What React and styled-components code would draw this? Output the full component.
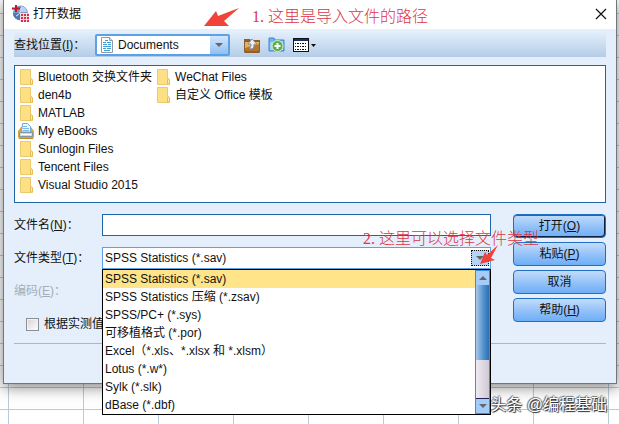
import { useState } from "react";
import styled, { createGlobalStyle } from "styled-components";

const FILES = [
  { name: "Bluetooth 交换文件夹" },
  { name: "den4b" },
  { name: "MATLAB" },
  { name: "My eBooks", type: "ebooks" },
  { name: "Sunlogin Files" },
  { name: "Tencent Files" },
  { name: "Visual Studio 2015" },
  { name: "WeChat Files" },
  { name: "自定义 Office 模板" },
];

const FILE_TYPES = [
  "SPSS Statistics (*.sav)",
  "SPSS Statistics 压缩 (*.zsav)",
  "SPSS/PC+ (*.sys)",
  "可移植格式 (*.por)",
  "Excel（*.xls、*.xlsx 和 *.xlsm）",
  "Lotus (*.w*)",
  "Sylk (*.slk)",
  "dBase (*.dbf)",
];

export default function App() {
  const [fileName, setFileName] = useState("");
  const [fileType, setFileType] = useState(FILE_TYPES[0]);

  return (
    <Sheet>
      <GlobalStyle />
      <Dialog role="dialog" aria-labelledby="dialog-title">
        <TitleBar>
          <AppIcon />
          <Title id="dialog-title">打开数据</Title>
          <CloseButton type="button" aria-label="关闭">
            <svg width="12" height="12" viewBox="0 0 12 12">
              <path d="M1 1l10 10M11 1L1 11" stroke="#111" strokeWidth="1.2" />
            </svg>
          </CloseButton>
          <PathNote>
            <BigArrow />
            1. 这里是导入文件的路径
          </PathNote>
        </TitleBar>

        <Content>
          <Toolbar>
            <PlaceLabel htmlFor="place">
              查找位置(<u>I</u>)：
            </PlaceLabel>
            <PlaceBox>
              <DocumentIcon />
              <PlaceSelect id="place">
                <option>Documents</option>
              </PlaceSelect>
              <PlaceArrow>
                <Triangle />
              </PlaceArrow>
            </PlaceBox>
            <Tools>
              <ToolButton type="button" aria-label="向上一级">
                <UpIcon />
              </ToolButton>
              <ToolButton type="button" aria-label="新建文件夹">
                <NewFolderIcon />
              </ToolButton>
              <ToolButton type="button" aria-label="查看">
                <ViewIcon />
              </ToolButton>
            </Tools>
          </Toolbar>

          <FileList>
            {FILES.map((file) => (
              <FileItem key={file.name}>
                {file.type === "ebooks" ? <EbooksIcon /> : <FolderIcon />}
                {file.name}
              </FileItem>
            ))}
          </FileList>

          <Form>
            <Fields>
              <label htmlFor="file-name">
                文件名(<u>N</u>)：
              </label>
              <NameInput
                id="file-name"
                value={fileName}
                onChange={(e) => setFileName(e.target.value)}
              />
              <label htmlFor="file-type">
                文件类型(<u>T</u>)：
              </label>
              <TypeBox>
                <TypeSelect
                  id="file-type"
                  value={fileType}
                  onChange={(e) => setFileType(e.target.value)}
                >
                  {FILE_TYPES.map((type) => (
                    <option key={type}>{type}</option>
                  ))}
                </TypeSelect>
                <TypeArrow>
                  <Triangle />
                </TypeArrow>
                <Popup>
                  <Options role="listbox" aria-label="文件类型">
                    {FILE_TYPES.map((type) => (
                      <Option
                        key={type}
                        role="option"
                        aria-selected={type === fileType}
                        $selected={type === fileType}
                        onClick={() => setFileType(type)}
                      >
                        {type}
                      </Option>
                    ))}
                  </Options>
                  <ScrollBar>
                    <ScrollButton type="button" aria-label="向上滚动">
                      <Triangle $up />
                    </ScrollButton>
                    <ScrollThumb />
                    <ScrollTrack />
                    <ScrollButton type="button" aria-label="向下滚动">
                      <Triangle />
                    </ScrollButton>
                  </ScrollBar>
                </Popup>
                <TypeNote>
                  2. 这里可以选择文件类型
                  <SmallArrow />
                </TypeNote>
              </TypeBox>
              <DisabledLabel>
                编码(<u>E</u>)：
              </DisabledLabel>
            </Fields>
            <Buttons>
              <ActionButton type="button" $primary>
                打开(<u>O</u>)
              </ActionButton>
              <ActionButton type="button">
                粘贴(<u>P</u>)
              </ActionButton>
              <ActionButton type="button">取消</ActionButton>
              <ActionButton type="button">
                帮助(<u>H</u>)
              </ActionButton>
            </Buttons>
          </Form>

          <CheckRow>
            <CheckBox type="checkbox" />
            根据实测值
          </CheckRow>
          <Divider />
        </Content>
      </Dialog>
      <Watermark>头条 @编程基础</Watermark>
    </Sheet>
  );
}

function AppIcon() {
  return (
    <svg width="17" height="17" viewBox="0 0 17 17">
      <circle cx="8.5" cy="8" r="7.5" fill="#7d9cc6" />
      <path d="M9 1a7 7 0 0 1 6 6H9z" fill="#b9d3ea" />
      <path d="M1 8h7v7a7 7 0 0 1-7-7z" fill="#4f78b0" />
      <path d="M4 11c3-1 5-4 5-8" stroke="#dce9f5" fill="none" />
      <path d="M4 0v7M0 3.5h8" stroke="#c41230" strokeWidth="2" />
      <rect x="8" y="8" width="9" height="9" fill="#f6d9de" />
      <path
        d="M9 9h2v2H9zM12 9h2v2h-2zM15 9h2v2h-2zM9 12h2v2H9zM12 12h2v2h-2zM15 12h2v2h-2zM9 15h2v2H9zM12 15h2v2h-2zM15 15h2v2h-2z"
        fill="#d2304c"
      />
    </svg>
  );
}

function DocumentIcon() {
  return (
    <svg width="12" height="16" viewBox="0 0 12 16">
      <path d="M.5.5h8l3 3v12H.5z" fill="#fff" stroke="#8f9aa5" />
      <path d="M8.5.5v3h3" fill="#dde4ea" stroke="#8f9aa5" />
      <path
        d="M4 3.5h3M2 5.500h3M6 5.500h4M2 7.500h4M7 7.500h3M2 9.500h8M2 11.500h3M6 11.500h4M3 13.500h6"
        stroke="#3f9ad6"
      />
    </svg>
  );
}

function UpIcon() {
  return (
    <svg width="16" height="15" viewBox="0 0 16 15">
      <path d="M0 1h6l1 1h9v12l-1 1H1l-1-1z" fill="#8d602b" />
      <path d="M1 4h14v9H1z" fill="#e0b163" />
      <path d="M1 10l14-4v7H1z" fill="#b5762a" />
      <path
        d="M8 1l5 5h-3c0 4-1 5-4 5V9c1 0 1-1 1-3H4z"
        fill="#e6effc"
        stroke="#7388b3"
        strokeWidth=".8"
      />
    </svg>
  );
}

function NewFolderIcon() {
  return (
    <svg width="17" height="16" viewBox="0 0 17 16">
      <path d="M1 1h5l1 2h9v11H1z" fill="#78b1e6" stroke="#3f87cc" />
      <path d="M2 5l13-1v9H2z" fill="#a8d2f4" />
      <circle cx="9.500" cy="9" r="5.500" fill="#57b04b" stroke="#d3ecc9" />
      <path d="M9.500 6v6M6.500 9h6" stroke="#fff" strokeWidth="2" />
    </svg>
  );
}

function ViewIcon() {
  return (
    <svg width="24" height="14" viewBox="0 0 24 14">
      <rect x=".5" y=".5" width="15" height="13" fill="#fff" stroke="#111" />
      <path d="M1 2h14" stroke="#16325f" strokeWidth="2" />
      <path
        d="M2 5.500h12M2 8.500h12M2 11.500h12"
        stroke="#111"
        strokeDasharray="1 1 2 1"
      />
      <path d="M18 6h5l-2.500 3z" fill="#111" />
    </svg>
  );
}

function FolderIcon() {
  return (
    <svg width="16" height="16" viewBox="0 0 16 16">
      <path d="M2.500.5h10v9l2 2v4h-12z" fill="#fddf86" stroke="#ecca6c" />
      <path d="M12.500 15v-4l1-1.500 1 1.500v4z" fill="#ffeeb5" stroke="#e8bd50" />
    </svg>
  );
}

function EbooksIcon() {
  return (
    <svg width="16" height="16" viewBox="0 0 16 16">
      <path d="M0 8l3-4h10l3 4v6l-1 2H1l-1-2z" fill="#d9a63c" />
      <path d="M4.500.5h5l3 3V9h-9z" fill="#eff8ff" stroke="#6fa9d8" />
      <path d="M5 3.500h4M5 5.500h6M5 7.500h6" stroke="#7fb7e2" />
      <path d="M1.500 9.500h13v4h-13z" fill="#c5deef" stroke="#7f97a8" />
      <path d="M3 11.500h10" stroke="#fff" />
      <path d="M1 15.500h14" stroke="#c58b22" />
    </svg>
  );
}

function BigArrow() {
  return (
    <svg width="36" height="20" viewBox="0 0 36 20">
      <path d="M0 18L12 3l2 5L35 0 20 13l5 5z" fill="#f0433a" />
    </svg>
  );
}

function SmallArrow() {
  return (
    <svg width="20" height="20" viewBox="0 0 20 20">
      <path d="M0 19L5 7l2 3L18 0l-7 13 4 2z" fill="#f0433a" />
    </svg>
  );
}

const GlobalStyle = createGlobalStyle`
  * {
    box-sizing: border-box;
  }
  body {
    margin: 0;
    color: #111;
    font-family: "Liberation Sans", "Noto Sans CJK SC", sans-serif;
    font-size: 12px;
    line-height: 18px;
  }
  button, input, select {
    font: inherit;
    color: inherit;
  }
`;

const Sheet = styled.main`
  position: relative;
  min-height: 100vh;
  padding: 0 2px 0 3px;
  overflow: hidden;
  background-color: #fff;
  background-image: linear-gradient(90deg, #b9cad9 1px, transparent 1px),
    linear-gradient(#b9cad9 1px, transparent 1px);
  background-size: 75px 22px;
  background-position: 8px 13px;
`;

const Dialog = styled.section`
  border: 1px solid #70767c;
  border-top: 0;
  background: #e4effb;
  box-shadow: 0 3px 14px rgba(0, 0, 0, 0.5);
`;

const TitleBar = styled.header`
  position: relative;
  display: flex;
  align-items: center;
  height: 29px;
  padding: 0 9px 2px 8px;
  background: #fff;
`;

const Title = styled.h1`
  flex: 1;
  margin: 0 0 0 4px;
  font-size: 12px;
  font-weight: 400;
`;

const CloseButton = styled.button`
  display: flex;
  padding: 0;
  border: 0;
  background: none;
`;

const Note = styled.p`
  position: absolute;
  margin: 0;
  color: #dc3545;
  font-family: "Liberation Serif", "Noto Sans CJK SC", serif;
  font-size: 16px;
  font-weight: 300;
  line-height: 20px;
  white-space: nowrap;
  pointer-events: none;
  svg {
    position: absolute;
  }
`;

const PathNote = styled(Note)`
  top: 7px;
  left: 248px;
  svg {
    top: 1px;
    left: -48px;
  }
`;

const TypeNote = styled(Note)`
  top: -19px;
  right: -49px;
  z-index: 2;
  svg {
    top: 16px;
    right: 39px;
  }
`;

const Content = styled.div`
  padding: 0 10px 39px;
`;

const Toolbar = styled.div`
  display: flex;
  align-items: center;
  height: 28px;
  padding-top: 4px;
  background: linear-gradient(#e8f2fd, #b4cde7);
`;

const PlaceLabel = styled.label`
  width: 81px;
  white-space: nowrap;
`;

const PlaceBox = styled.div`
  display: flex;
  align-items: center;
  width: 135px;
  height: 22px;
  padding-left: 4px;
  border: 2px solid #5ca0e6;
  border-radius: 2px;
  background: #fff;
`;

const PlaceSelect = styled.select`
  flex: 1;
  height: 18px;
  padding: 0 0 0 5px;
  border: 0;
  outline: 0;
  appearance: none;
  background: none;
`;

const PlaceArrow = styled.span`
  display: flex;
  align-items: center;
  justify-content: center;
  width: 18px;
  height: 18px;
  background: linear-gradient(#d3e6fb, #8fc0f3);
  pointer-events: none;
`;

const Triangle = styled.i`
  width: 0;
  height: 0;
  border: 4px solid transparent;
  ${({ $up }) =>
    $up
      ? "border-top: 0; border-bottom-color: #666;"
      : "border-bottom: 0; border-top-color: #666;"}
`;

const Tools = styled.div`
  display: flex;
  align-items: center;
  gap: 8px;
  margin-left: 14px;
`;

const ToolButton = styled.button`
  display: flex;
  padding: 0;
  border: 0;
  background: none;
`;

const FileList = styled.ul`
  display: grid;
  grid-template-rows: repeat(7, 18px);
  grid-auto-flow: column;
  grid-auto-columns: max-content;
  column-gap: 3px;
  height: 138px;
  margin: 8px 0 0;
  padding: 2px 3px;
  border: 1px solid #1f66a8;
  background: #fff;
  list-style: none;
`;

const FileItem = styled.li`
  display: flex;
  align-items: center;
  gap: 4px;
`;

const Form = styled.div`
  display: flex;
  gap: 22px;
  margin-top: 11px;
`;

const Fields = styled.div`
  flex: 1;
  display: grid;
  grid-template-columns: 88px 1fr;
  grid-template-rows: 22px 22px 22px;
  row-gap: 11px;
  align-items: center;
  align-content: start;
  white-space: nowrap;
`;

const NameInput = styled.input`
  width: 100%;
  height: 22px;
  padding: 0 3px;
  border: 1px solid #1f66a8;
  outline: 0;
  background: #fff;
`;

const TypeBox = styled.div`
  position: relative;
  display: flex;
  align-items: center;
  height: 22px;
  padding-right: 1px;
  border: 1px solid #5ca0e6;
  background: #fff;
`;

const TypeSelect = styled.select`
  flex: 1;
  height: 18px;
  padding: 0 2px;
  border: 0;
  outline: 0;
  appearance: none;
  background: none;
`;

const TypeArrow = styled.span`
  display: flex;
  align-items: center;
  justify-content: center;
  width: 18px;
  height: 16px;
  border: 1px dotted #111;
  background: #b5d3f5;
  pointer-events: none;
`;

const Popup = styled.div`
  position: absolute;
  top: 21px;
  left: -1px;
  right: -1px;
  z-index: 1;
  display: flex;
  border: 1px solid #000;
  background: #fff;
`;

const Options = styled.ul`
  flex: 1;
  margin: 0;
  padding: 0;
  list-style: none;
`;

const Option = styled.li`
  height: 18px;
  padding-left: 2px;
  background: ${({ $selected }) => ($selected ? "#ffe48a" : "#fff")};
`;

const ScrollBar = styled.div`
  display: flex;
  flex-direction: column;
  width: 15px;
  border: 1px solid #3f8bdc;
`;

const ScrollButton = styled.button`
  display: flex;
  align-items: center;
  justify-content: center;
  height: 14px;
  padding: 0;
  border: 0;
  background: #a4ccfa;
`;

const ScrollThumb = styled.div`
  flex: 1;
  background: linear-gradient(90deg, #a8c9ea, #4d8fce 60%, #2e6fb3);
`;

const ScrollTrack = styled.div`
  height: 39px;
  border-bottom: 1px solid #225;
  background: linear-gradient(90deg, #efeaf0, #cfc9d6);
`;

const DisabledLabel = styled.span`
  color: #a3adb8;
`;

const Buttons = styled.div`
  display: flex;
  flex-direction: column;
  gap: 4px;
  width: 93px;
`;

const ActionButton = styled.button`
  height: 24px;
  padding: 0;
  border: 1px solid #1f6fc4;
  border-radius: 4px;
  background: linear-gradient(#c3dcfa, #8dbff8 60%, #6eaef6);
  box-shadow: ${({ $primary }) =>
    $primary ? "inset -1px -1px 0 #0b2245, inset 0 1px 0 #3d5f8c" : "none"};
`;

const CheckRow = styled.label`
  display: flex;
  align-items: center;
  gap: 5px;
  width: max-content;
  margin: -7px 0 0 12px;
`;

const CheckBox = styled.input`
  width: 13px;
  height: 13px;
  margin: 0;
  border: 1px solid #8b8f94;
  appearance: none;
  background: linear-gradient(135deg, #d4d4d4, #fff);
  box-shadow: inset 0 0 0 1px #f3f3f3;
`;

const Divider = styled.hr`
  margin: 10px 0 0;
  border: 0;
  border-top: 1px solid #a9b8c8;
`;

const Watermark = styled.p`
  position: absolute;
  right: 12px;
  bottom: 8px;
  margin: 0;
  color: #fff;
  font-size: 16px;
  line-height: 22px;
  text-shadow: 1px 1px 1px #222, -1px 0 1px #555, 0 -1px 1px #777;
`;
